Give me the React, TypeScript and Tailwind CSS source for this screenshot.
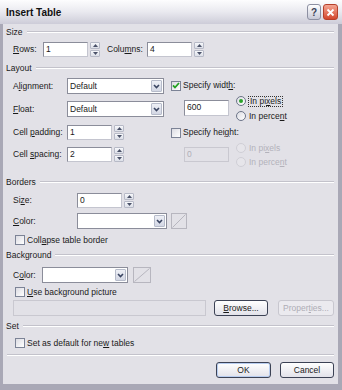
import React from "react";

const ui = "font-['Liberation_Sans',Arial,sans-serif] text-[8.5px] text-[#1a1a1a]";

function U({ children }: { children: React.ReactNode }) {
  return <span className="underline decoration-1 underline-offset-[1px]">{children}</span>;
}

function Group({ label }: { label: string }) {
  return (
    <div className="flex h-[12px] items-center pl-[3px] pr-[4px]">
      <span className="leading-none">{label}</span>
      <div className="ml-[4px] h-[2px] flex-1 border-t border-b border-t-[#c3c2cb] border-b-white" />
    </div>
  );
}

function Field({ value, w, disabled }: { value: string; w: string; disabled?: boolean }) {
  return (
    <div
      className={`h-[15px] ${w} border pl-[2px] leading-[13px] ${
        disabled
          ? "border-[#c9c8d0] bg-[#e2e1e7] text-[#b0afb7]"
          : "border-[#8b8d9a] border-b-[#c4c5cf] border-r-[#c4c5cf] bg-white"
      }`}
    >
      {value}
    </div>
  );
}

function Spin() {
  return (
    <div className="ml-[2px] flex h-[15px] w-[10px] flex-col gap-[1px]">
      {["up", "down"].map((d) => (
        <div
          key={d}
          className="flex flex-1 items-center justify-center rounded-[1px] border border-[#b7bac7] bg-gradient-to-b from-[#f7f8fb] to-[#dcdfe8]"
        >
          <svg width="5" height="3" viewBox="0 0 5 3">
            <path d={d === "up" ? "M0 3 L2.5 0 L5 3Z" : "M0 0 L2.5 3 L5 0Z"} fill="#4a5168" />
          </svg>
        </div>
      ))}
    </div>
  );
}

function Select({ w, value }: { w: string; value?: string }) {
  return (
    <div className={`flex h-[16px] ${w} border border-[#8b8d9a] bg-white`}>
      <div className="flex-1 pl-[2px] leading-[14px]">{value}</div>
      <div className="m-[1px] flex w-[11px] items-center justify-center rounded-[1px] border border-[#b6bbca] bg-gradient-to-b from-[#eef0f6] to-[#d3d7e4]">
        <svg width="7" height="5" viewBox="0 0 7 5">
          <path d="M1 1 L3.5 3.5 L6 1" stroke="#3a4562" strokeWidth="1.6" fill="none" />
        </svg>
      </div>
    </div>
  );
}

function Swatch({ w }: { w: number }) {
  return (
    <svg width={w} height="16" viewBox={`0 0 ${w} 16`}>
      <rect x="0.5" y="0.5" width={w - 1} height="15" fill="#e2e1e7" stroke="#b7b6bf" />
      <line x1="1.5" y1="14.5" x2={w - 1.5} y2="1.5" stroke="#b7b6bf" />
    </svg>
  );
}

function Check({ checked }: { checked?: boolean }) {
  return (
    <div className="flex h-[10px] w-[10px] items-center justify-center border border-[#7c8396] bg-gradient-to-br from-[#dcdce3] to-white">
      {checked && (
        <svg width="8" height="7" viewBox="0 0 8 7">
          <path d="M1 3.3 L3 5.5 L7 1" stroke="#21a121" strokeWidth="1.8" fill="none" />
        </svg>
      )}
    </div>
  );
}

function Radio({ checked, disabled }: { checked?: boolean; disabled?: boolean }) {
  return (
    <div
      className={`flex h-[10px] w-[10px] items-center justify-center rounded-full border ${
        disabled ? "border-[#d0cfd6] bg-[#e6e5ea]" : "border-[#6c7488] bg-gradient-to-br from-[#dcdce3] to-white"
      }`}
    >
      {checked && <div className="h-[4px] w-[4px] rounded-full bg-[#2aa32a]" />}
    </div>
  );
}

function Btn({
  children,
  w,
  disabled,
  primary,
}: {
  children: React.ReactNode;
  w: string;
  disabled?: boolean;
  primary?: boolean;
}) {
  return (
    <div
      className={`flex h-[16px] ${w} items-center justify-center rounded-[3px] border ${
        disabled
          ? "border-[#c8c7cf] bg-[#ebeaef] text-[#aeadb6]"
          : primary
          ? "border-[#3c4255] bg-gradient-to-b from-white to-[#e2e2ea] shadow-[inset_0_0_0_1px_#b8cdf0]"
          : "border-[#3c4255] bg-gradient-to-b from-white to-[#e2e2ea]"
      }`}
    >
      {children}
    </div>
  );
}

export default function App() {
  return (
    <div className={`${ui} flex h-[390px] w-[342px] flex-col bg-[#a9a8b6]`}>
      {/* title bar */}
      <div className="flex h-[24px] items-center justify-between bg-gradient-to-b from-[#fdfdfe] via-[#e9e9ef] to-[#cdccd8] pl-[6px] pr-[4px]">
        <span className="text-[10px] font-bold text-[#111]">Insert Table</span>
        <div className="flex gap-[2px]">
          <div className="flex h-[16px] w-[14px] items-center justify-center rounded-[3px] border border-[#8d90a2] bg-gradient-to-b from-white to-[#c7c9d7] text-[10px] font-bold text-[#3a3f55]">
            ?
          </div>
          <div className="flex h-[16px] w-[15px] items-center justify-center rounded-[3px] border border-[#b5402b] bg-gradient-to-b from-[#f3a593] to-[#d3452b]">
            <svg width="9" height="9" viewBox="0 0 9 9">
              <path d="M1.5 1.5 L7.5 7.5 M7.5 1.5 L1.5 7.5" stroke="white" strokeWidth="1.8" />
            </svg>
          </div>
        </div>
      </div>

      {/* body */}
      <div className="ml-[3px] mr-[4px] flex h-[360px] flex-col bg-[#e2e1e7]">
        <div className="mt-[2px]">
          <Group label="Size" />
        </div>
        <div className="mt-[4px] flex h-[15px] items-center pl-[10px]">
          <span className="w-[30px]">
            <U>R</U>ows:
          </span>
          <Field value="1" w="w-[45px]" />
          <Spin />
          <span className="ml-[7px] w-[40px]">
            Colu<U>m</U>ns:
          </span>
          <Field value="4" w="w-[45px]" />
          <Spin />
        </div>

        <div className="mt-[5px]">
          <Group label="Layout" />
        </div>
        <div className="mt-[4px] flex pl-[10px]">
          <div className="flex w-[151px] flex-col">
            <div className="flex h-[16px] items-center">
              <span className="w-[54px]">
                A<U>l</U>ignment:
              </span>
              <Select w="w-[97px]" value="Default" />
            </div>
            <div className="mt-[7px] flex h-[16px] items-center">
              <span className="w-[54px]">
                <U>F</U>loat:
              </span>
              <Select w="w-[97px]" value="Default" />
            </div>
            <div className="mt-[8px] flex h-[15px] items-center">
              <span className="w-[54px]">
                Cell <U>p</U>adding:
              </span>
              <Field value="1" w="w-[45px]" />
              <Spin />
            </div>
            <div className="mt-[7px] flex h-[15px] items-center">
              <span className="w-[54px]">
                Cell <U>s</U>pacing:
              </span>
              <Field value="2" w="w-[45px]" />
              <Spin />
            </div>
          </div>

          <div className="ml-[7px] flex flex-col">
            <div className="mt-[1px] flex h-[13px] items-center gap-[2px]">
              <Check checked />
              <span>
                Specify widt<U>h</U>:
              </span>
            </div>
            <div className="mt-[4px] flex">
              <div className="ml-[13px] mt-[4px]">
                <Field value="600" w="w-[45px] h-[16px]" />
              </div>
              <div className="ml-[7px] flex flex-col">
                <div className="flex h-[10px] items-center gap-[2px]">
                  <Radio checked />
                  <span className="border border-dotted border-[#333] px-[1px] leading-[9px]">
                    In pi<U>x</U>els
                  </span>
                </div>
                <div className="mt-[5px] flex h-[10px] items-center gap-[3px]">
                  <Radio />
                  <span>
                    In perce<U>n</U>t
                  </span>
                </div>
              </div>
            </div>
            <div className="mt-[5px] flex h-[13px] items-center gap-[2px]">
              <Check />
              <span>
                Specify hei<U>g</U>ht:
              </span>
            </div>
            <div className="mt-[4px] flex text-[#b3b2bb]">
              <div className="ml-[13px] mt-[4px]">
                <Field value="0" w="w-[45px]" disabled />
              </div>
              <div className="ml-[7px] flex flex-col">
                <div className="flex h-[10px] items-center gap-[3px]">
                  <Radio disabled />
                  <span>
                    In pi<U>x</U>els
                  </span>
                </div>
                <div className="mt-[4px] flex h-[10px] items-center gap-[3px]">
                  <Radio disabled />
                  <span>
                    In perce<U>n</U>t
                  </span>
                </div>
              </div>
            </div>
          </div>
        </div>

        <div className="mt-[9px]">
          <Group label="Borders" />
        </div>
        <div className="mt-[5px] flex h-[15px] items-center pl-[10px]">
          <span className="w-[64px]">
            Si<U>z</U>e:
          </span>
          <Field value="0" w="w-[45px]" />
          <Spin />
        </div>
        <div className="mt-[5px] flex h-[16px] items-center pl-[10px]">
          <span className="w-[64px]">
            <U>C</U>olor:
          </span>
          <Select w="w-[90px]" />
          <div className="ml-[4px] flex">
            <Swatch w={16} />
          </div>
        </div>
        <div className="mt-[5px] flex h-[12px] items-center gap-[2px] pl-[12px]">
          <Check />
          <span>
            Coll<U>a</U>pse table border
          </span>
        </div>

        <div className="mt-[3px]">
          <Group label="Background" />
        </div>
        <div className="mt-[6px] flex h-[16px] items-center pl-[10px]">
          <span className="w-[29px]">
            C<U>o</U>lor:
          </span>
          <Select w="w-[86px]" />
          <div className="ml-[5px] flex">
            <Swatch w={18} />
          </div>
        </div>
        <div className="mt-[3px] flex h-[12px] items-center gap-[2px] pl-[12px]">
          <Check />
          <span>
            <U>U</U>se background picture
          </span>
        </div>
        <div className="mt-[2px] flex h-[16px] items-center pl-[10px]">
          <div className="h-[16px] w-[193px] border border-[#c9c8d0] bg-[#e2e1e7]" />
          <div className="ml-[8px]">
            <Btn w="w-[54px]">
              <span>
                <U>B</U>rowse...
              </span>
            </Btn>
          </div>
          <div className="ml-[10px]">
            <Btn w="w-[56px]" disabled>
              <span>
                Proper<U>t</U>ies...
              </span>
            </Btn>
          </div>
        </div>

        <div className="mt-[4px]">
          <Group label="Set" />
        </div>
        <div className="mt-[5px] flex h-[12px] items-center gap-[2px] pl-[12px]">
          <Check />
          <span>
            Set as default for ne<U>w</U> tables
          </span>
        </div>
        <div className="mt-[5px] ml-[4px] mr-[4px] h-[2px] border-t border-b border-t-[#c3c2cb] border-b-white" />
        <div className="mt-[6px] flex justify-end gap-[9px] pr-[4px]">
          <Btn w="w-[55px]" primary>
            OK
          </Btn>
          <Btn w="w-[54px]">Cancel</Btn>
        </div>
      </div>
    </div>
  );
}
